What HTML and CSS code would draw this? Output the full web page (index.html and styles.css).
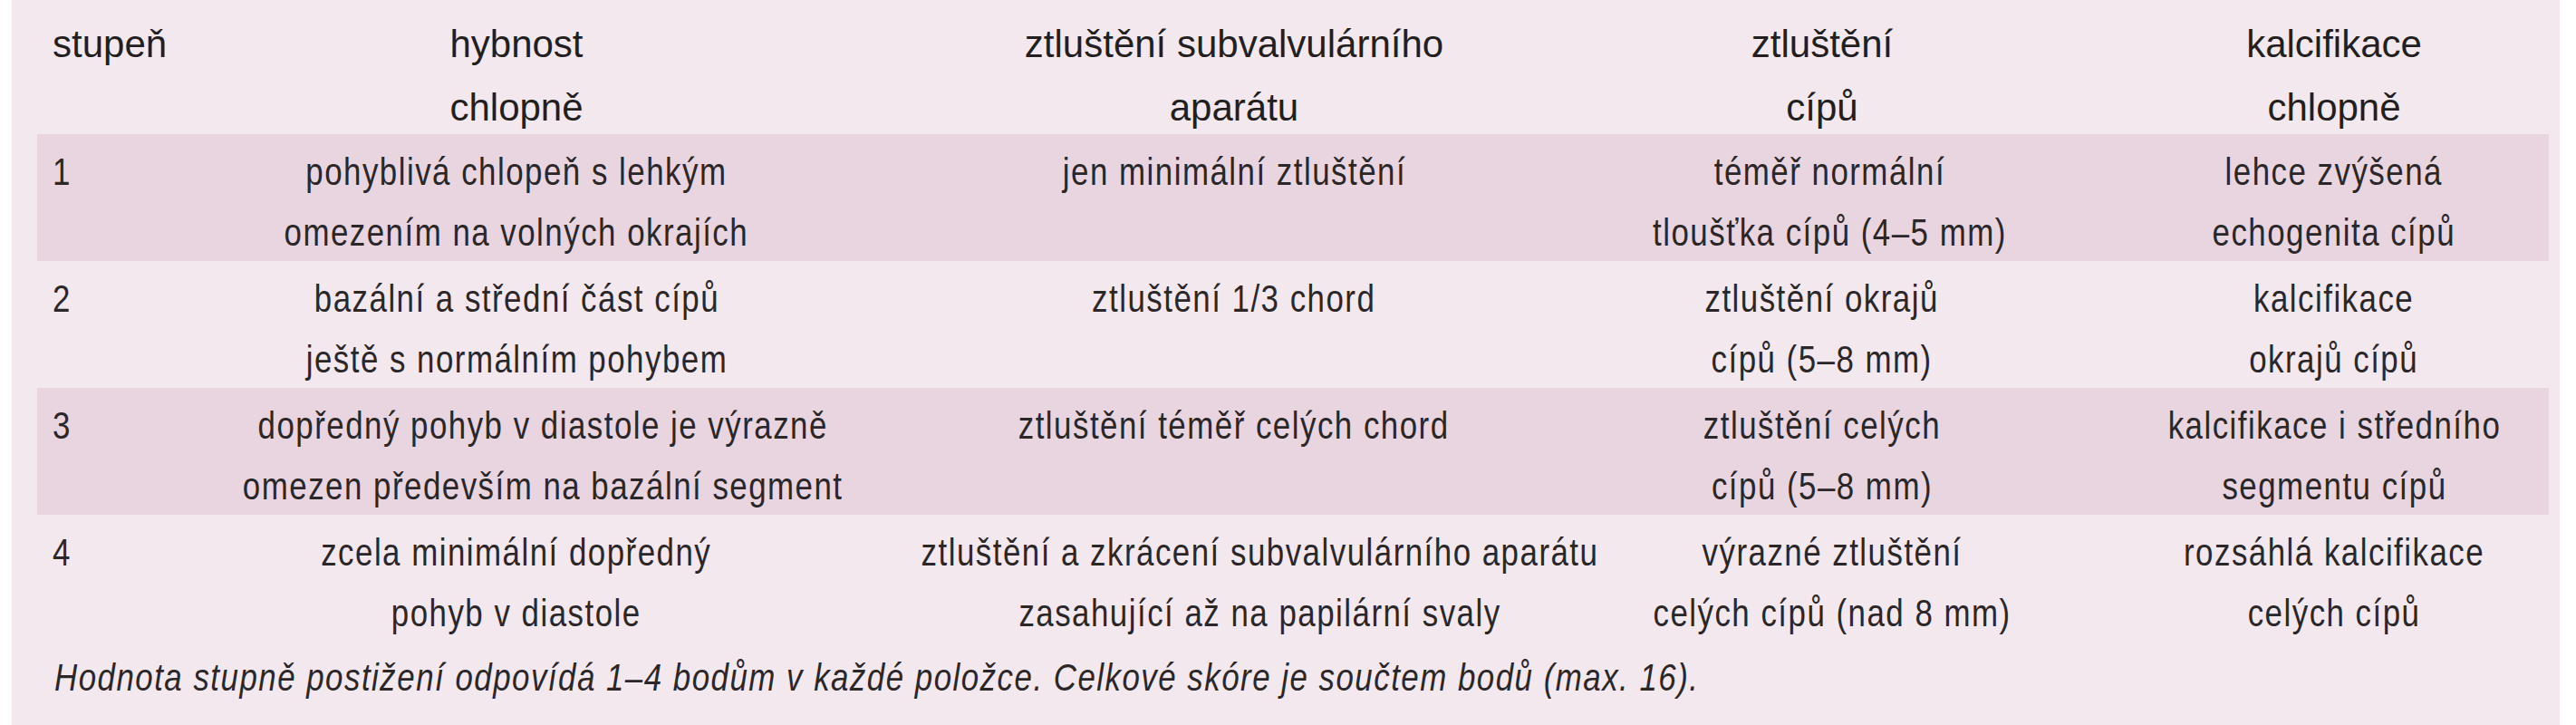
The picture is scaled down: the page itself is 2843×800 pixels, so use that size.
FILE: index.html
```html
<!DOCTYPE html>
<html lang="cs">
<head>
<meta charset="utf-8">
<title>Stupně postižení chlopně</title>
<link rel="stylesheet" href="styles.css">
</head>
<body>
<div class="panel">
  <div class="row head">
    <div class="cell first">stupeň</div>
    <div class="cell">hybnost<br>chlopně</div>
    <div class="cell">ztluštění subvalvulárního<br>aparátu</div>
    <div class="cell">ztluštění<br>cípů</div>
    <div class="cell last">kalcifikace<br>chlopně</div>
  </div>
  <div class="row body shaded">
    <div class="cell first"><span class="t">1</span></div>
    <div class="cell"><span class="t">pohyblivá chlopeň s lehkým<br>omezením na volných okrajích</span></div>
    <div class="cell"><span class="t">jen minimální ztluštění</span></div>
    <div class="cell"><span class="t">téměř normální<br>tloušťka cípů (4–5 mm)</span></div>
    <div class="cell last"><span class="t">lehce zvýšená<br>echogenita cípů</span></div>
  </div>
  <div class="row body">
    <div class="cell first"><span class="t">2</span></div>
    <div class="cell"><span class="t">bazální a střední část cípů<br>ještě s normálním pohybem</span></div>
    <div class="cell"><span class="t">ztluštění 1/3 chord</span></div>
    <div class="cell"><span class="t">ztluštění okrajů<br>cípů (5–8 mm)</span></div>
    <div class="cell last"><span class="t">kalcifikace<br>okrajů cípů</span></div>
  </div>
  <div class="row body shaded">
    <div class="cell first"><span class="t">3</span></div>
    <div class="cell"><span class="t">dopředný pohyb v diastole je výrazně<br>omezen především na bazální segment</span></div>
    <div class="cell"><span class="t">ztluštění téměř celých chord</span></div>
    <div class="cell"><span class="t">ztluštění celých<br>cípů (5–8 mm)</span></div>
    <div class="cell last"><span class="t">kalcifikace i středního<br>segmentu cípů</span></div>
  </div>
  <div class="row body">
    <div class="cell first"><span class="t">4</span></div>
    <div class="cell"><span class="t">zcela minimální dopředný<br>pohyb v diastole</span></div>
    <div class="cell"><span class="t">ztluštění a zkrácení subvalvulárního aparátu<br>zasahující až na papilární svaly</span></div>
    <div class="cell"><span class="t">výrazné ztluštění<br>celých cípů (nad 8 mm)</span></div>
    <div class="cell last"><span class="t">rozsáhlá kalcifikace<br>celých cípů</span></div>
  </div>
  <p class="note"><span class="t">Hodnota stupně postižení odpovídá 1–4 bodům v každé položce. Celkové skóre je součtem bodů (max. 16).</span></p>
</div>
</body>
</html>
```

FILE: styles.css
```css
html, body {
  margin: 0;
  padding: 0;
  background: #ffffff;
}

.panel {
  box-sizing: border-box;
  margin-left: 13px;
  width: 2812px;
  height: 800px;
  padding: 0 12px 0 28px;
  background: #f4e8ef;
  overflow: hidden;
}

.row {
  display: grid;
  grid-template-columns: 159px 740px 844px 454px 575px;
}

.cell {
  text-align: center;
  white-space: nowrap;
}

.cell.first {
  text-align: left;
  padding-left: 17px;
}

.cell.last {
  padding-left: 101px;
}

.head {
  height: 148px;
  box-sizing: border-box;
  padding-top: 14px;
  font-family: "Liberation Sans", Arial, sans-serif;
  font-size: 42px;
  line-height: 70px;
  color: #231f20;
}

.body {
  box-sizing: border-box;
  height: 140px;
  padding-top: 8px;
  font-family: "Liberation Sans", Arial, sans-serif;
  font-size: 42px;
  line-height: 67px;
  letter-spacing: 1.8px;
  color: #2b2729;
}

/* condensed look of the original typeface */
.t {
  display: inline-block;
  transform: scaleX(0.83);
  transform-origin: 50% 50%;
}

.cell.first .t,
.note .t {
  transform-origin: 0 50%;
}

.shaded {
  background: #e9d5df;
}

.note {
  margin: 0;
  padding: 8px 0 0 19px;
  font-family: "Liberation Sans", Arial, sans-serif;
  font-style: italic;
  font-size: 42px;
  line-height: 64px;
  letter-spacing: 1.8px;
  color: #2b2729;
  white-space: nowrap;
}
```
